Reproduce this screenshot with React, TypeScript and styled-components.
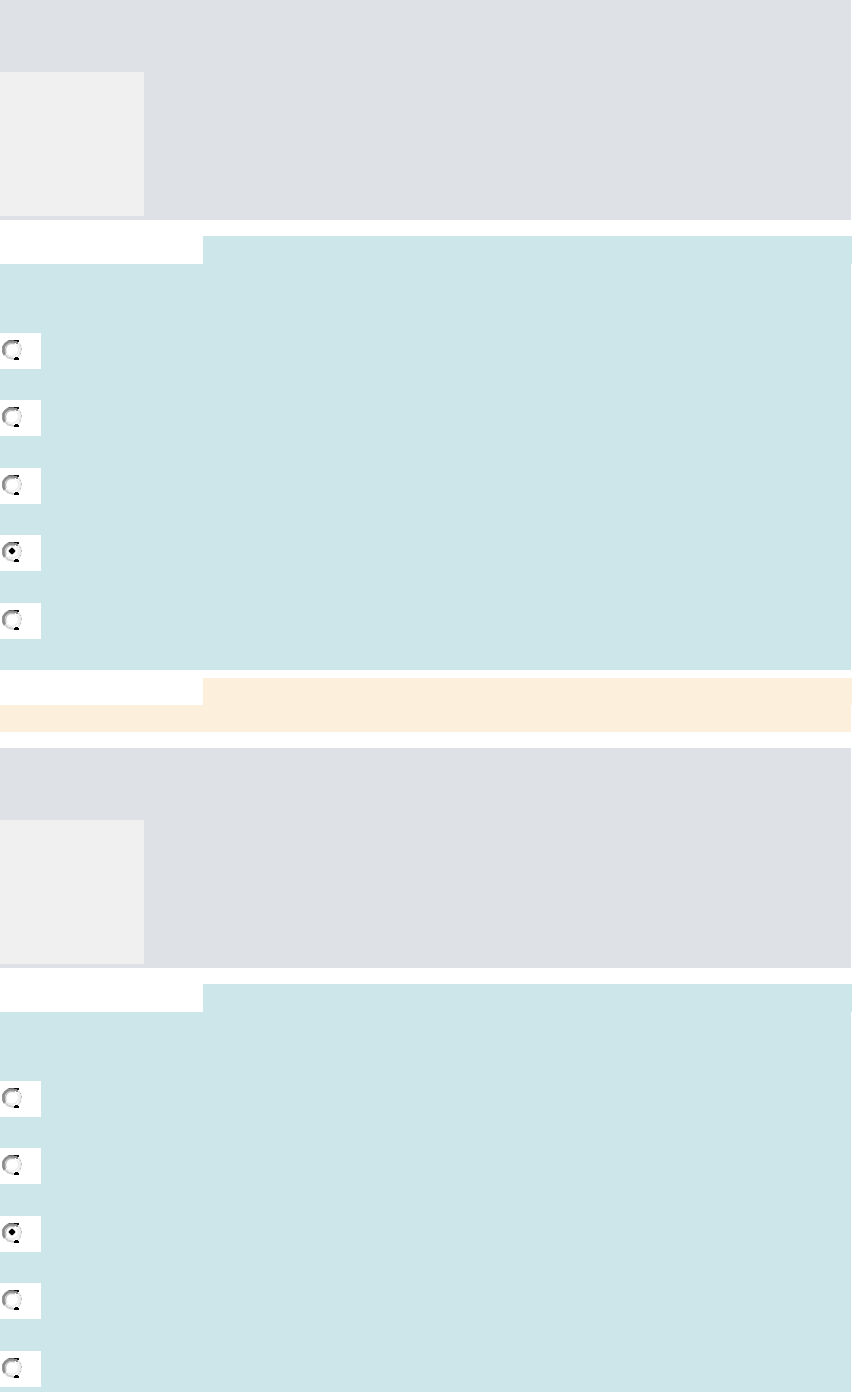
import styled, { createGlobalStyle } from "styled-components";

interface Question {
  id: number;
  selected: number;
}

const questions: Question[] = [
  { id: 1, selected: 3 },
  { id: 2, selected: 2 },
];

const OPTIONS = [0, 1, 2, 3, 4];

const RadioIcon = ({ checked }: { checked: boolean }) => (
  <svg width="24" height="36" viewBox="0 0 24 36" fill="none">
    {/* Outer bevel: dark on the left, fading to the right */}
    <path d="M14 8.5H9L5.5 11L3.5 14V19L5 22" stroke="#8c8c8c" strokeWidth="2.8" />
    <path d="M5 21.5L8 24.5L14 26" stroke="#cfcfcf" strokeWidth="2" />
    <path d="M18 10L20 12L21 16L20 21L18 24" stroke="#e4e4e4" strokeWidth="2" />
    {/* Inner bevel */}
    <path d="M15 10.5H10L7 12.5L5.5 16L6 20" stroke="#bdbdbd" strokeWidth="1.3" />
    <path d="M7 21L10 23H14L18 20L19 16L17 12" stroke="#ececec" strokeWidth="1.5" />
    <g shapeRendering="crispEdges">
      <path d="M9 7H14V8H9Z" fill="#666666" />
      <path d="M14 7H19V9H17V8H14Z" fill="#111111" />
      <path d="M14 8H17V9H18V11H16V10H14Z" fill="#8c8c8c" />
      <path d="M15 24H18V25H19V27H14V25H15Z" fill="#000000" />
      <path d="M20 12H21V13H20ZM21 15H22V17H21ZM20 20H21V21H20Z" fill="#c0c0c0" />
    </g>
    {checked && (
      <path
        d="M11 13H13V14H14V15H15V17H14V18H13V19H11V18H10V17H9V15H10V14H11Z"
        fill="#000000"
        stroke="#000000"
        strokeWidth="0.4"
      />
    )}
  </svg>
);

const App = () => {
  return (
    <Page>
      <GlobalStyle />
      {questions.map((question) => (
        <QuestionBlock key={question.id}>
          <Prompt>
            <Thumbnail />
          </Prompt>
          <Tab $tone="answer" />
          <AnswerPanel>
            {OPTIONS.map((option) => (
              <Option key={option}>
                <RadioIcon checked={option === question.selected} />
              </Option>
            ))}
          </AnswerPanel>
          <Tab $tone="feedback" />
          <FeedbackPanel />
        </QuestionBlock>
      ))}
    </Page>
  );
};

export default App;

const tones = {
  answer: { background: "#cde6e9", height: 28 },
  feedback: { background: "#fcefdc", height: 27 },
};

const GlobalStyle = createGlobalStyle`
  body {
    margin: 0;
    background: #ffffff;
    font-family: "Liberation Sans", Arial, sans-serif;
  }
`;

const Page = styled.main`
  width: 852px;
  height: 1392px;
  overflow: hidden;
  display: flex;
  flex-direction: column;
  gap: 16px;
`;

const QuestionBlock = styled.section`
  flex-shrink: 0;
  display: flex;
  flex-direction: column;
`;

const Prompt = styled.div`
  box-sizing: border-box;
  width: 851px;
  height: 220px;
  padding-top: 72px;
  margin-bottom: 16px;
  background: #dee2e7;
`;

const Thumbnail = styled.div`
  width: 144px;
  height: 144px;
  background: #f0f0f0;
`;

const Tab = styled.div<{ $tone: "answer" | "feedback" }>`
  height: ${({ $tone }) => tones[$tone].height}px;
  margin-left: 203px;
  background: ${({ $tone }) => tones[$tone].background};
`;

const AnswerPanel = styled.div`
  box-sizing: border-box;
  width: 851px;
  height: 406px;
  padding-top: 69px;
  margin-bottom: 8px;
  display: flex;
  flex-direction: column;
  background: ${tones.answer.background};
`;

const Option = styled.div`
  width: 41px;
  height: 36px;
  margin-bottom: 31px;
  background: #ffffff;

  /* Rows alternate between 67px and 68px apart */
  &:nth-child(even) {
    margin-bottom: 32px;
  }

  svg {
    display: block;
  }
`;

const FeedbackPanel = styled.div`
  width: 851px;
  height: 27px;
  background: ${tones.feedback.background};
`;
